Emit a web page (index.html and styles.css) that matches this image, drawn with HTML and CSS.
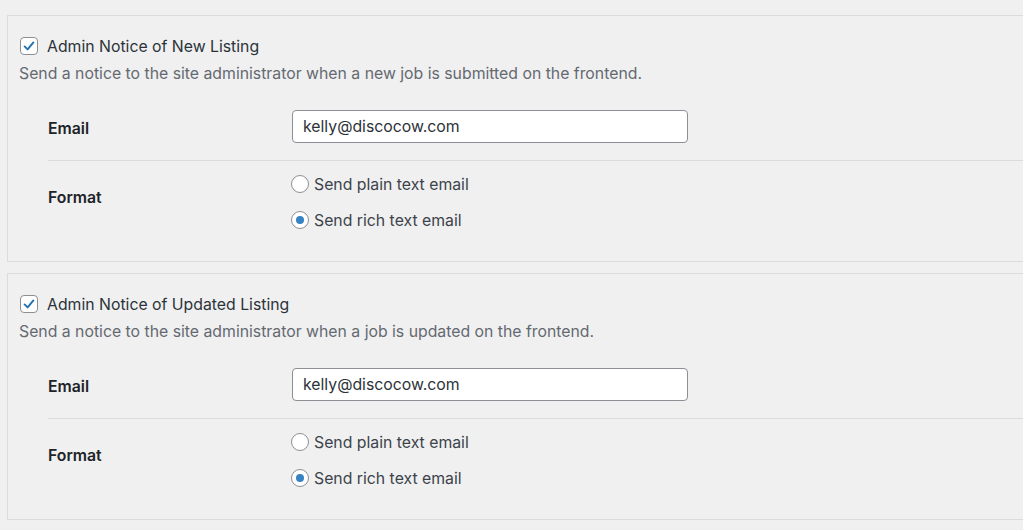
FILE: index.html
```html
<!DOCTYPE html>
<html lang="en">
<head>
<meta charset="utf-8">
<title>Notifications</title>
<link rel="stylesheet" href="styles.css">
</head>
<body>
<div class="wrap">
  <section class="notice-box">
    <label class="toggle">
      <span class="checkbox checked">
        <svg viewBox="0 0 20 20" width="16" height="16"><path d="M4.5 10.5 L8.3 14.2 L15.5 5.5" fill="none" stroke="#2271b1" stroke-width="2.4" stroke-linecap="round" stroke-linejoin="round"/></svg>
      </span>
      <span class="toggle-text">Admin Notice of New Listing</span>
    </label>
    <p class="desc">Send a notice to the site administrator when a new job is submitted on the frontend.</p>
    <table class="form-table">
      <tr class="row-email">
        <th>Email</th>
        <td><div class="input">kelly@discocow.com</div></td>
      </tr>
      <tr class="row-format">
        <th>Format</th>
        <td>
          <div class="radio-line"><span class="radio"></span><span>Send plain text email</span></div>
          <div class="radio-line"><span class="radio checked"></span><span>Send rich text email</span></div>
        </td>
      </tr>
    </table>
  </section>
  <section class="notice-box">
    <label class="toggle">
      <span class="checkbox checked">
        <svg viewBox="0 0 20 20" width="16" height="16"><path d="M4.5 10.5 L8.3 14.2 L15.5 5.5" fill="none" stroke="#2271b1" stroke-width="2.4" stroke-linecap="round" stroke-linejoin="round"/></svg>
      </span>
      <span class="toggle-text">Admin Notice of Updated Listing</span>
    </label>
    <p class="desc">Send a notice to the site administrator when a job is updated on the frontend.</p>
    <table class="form-table">
      <tr class="row-email">
        <th>Email</th>
        <td><div class="input">kelly@discocow.com</div></td>
      </tr>
      <tr class="row-format">
        <th>Format</th>
        <td>
          <div class="radio-line"><span class="radio"></span><span>Send plain text email</span></div>
          <div class="radio-line"><span class="radio checked"></span><span>Send rich text email</span></div>
        </td>
      </tr>
    </table>
  </section>
</div>
</body>
</html>
```

FILE: styles.css
```css
html, body {
  margin: 0;
  padding: 0;
  background: #f0f0f1;
  overflow: hidden;
}
body {
  font-family: Inter, "Liberation Sans", sans-serif;
  font-size: 15.8px;
  color: #3c434a;
}
.wrap {
  padding: 15px 0 0 7px;
}
.notice-box {
  border: 1px solid #dcdcde;
  border-right: none;
  margin: 0 -20px 11px 0;
  padding: 20px 0 30px 12px;
}
.toggle {
  display: flex;
  align-items: center;
  height: 20px;
}
.checkbox {
  width: 16px;
  height: 16px;
  border: 1px solid #8c8f94;
  border-radius: 4px;
  background: #fff;
  display: inline-flex;
  align-items: center;
  justify-content: center;
  margin-right: 9px;
  box-sizing: content-box;
}
.toggle-text {
  color: #2c3338;
}
.desc {
  margin: 7px 0 0 -1px;
  line-height: 21px;
  color: #646970;
}
.form-table {
  border-collapse: collapse;
  margin: 9px 0 0 28px;
  width: calc(100% - 28px);
}
.form-table th {
  width: 244px;
  text-align: left;
  vertical-align: top;
  font-weight: 600;
  color: #1d2327;
  padding: 0;
  line-height: 20px;
}
.form-table td {
  padding: 0;
}
.row-email th {
  padding-top: 26px;
}
.row-email td {
  padding: 17px 0 17px 0;
}
.row-email {
  border-bottom: 1px solid #dcdcde;
}
.row-format th {
  padding-top: 27px;
}
.row-format td {
  padding-top: 12px;
}
.input {
  width: 396px;
  height: 33px;
  box-sizing: border-box;
  border: 1px solid #8c8f94;
  border-radius: 4px;
  background: #fff;
  padding: 0 10px;
  line-height: 31px;
  color: #2c3338;
}
.radio-line {
  display: flex;
  align-items: center;
  height: 22px;
  margin-left: -1px;
}
.radio-line + .radio-line {
  margin-top: 14px;
}
.radio {
  width: 16px;
  height: 16px;
  border: 1px solid #8c8f94;
  border-radius: 50%;
  background: #fff;
  margin-right: 5px;
  position: relative;
}
.radio.checked::after {
  content: "";
  position: absolute;
  left: 4px;
  top: 4px;
  width: 8px;
  height: 8px;
  border-radius: 50%;
  background: #3582c4;
}
```
